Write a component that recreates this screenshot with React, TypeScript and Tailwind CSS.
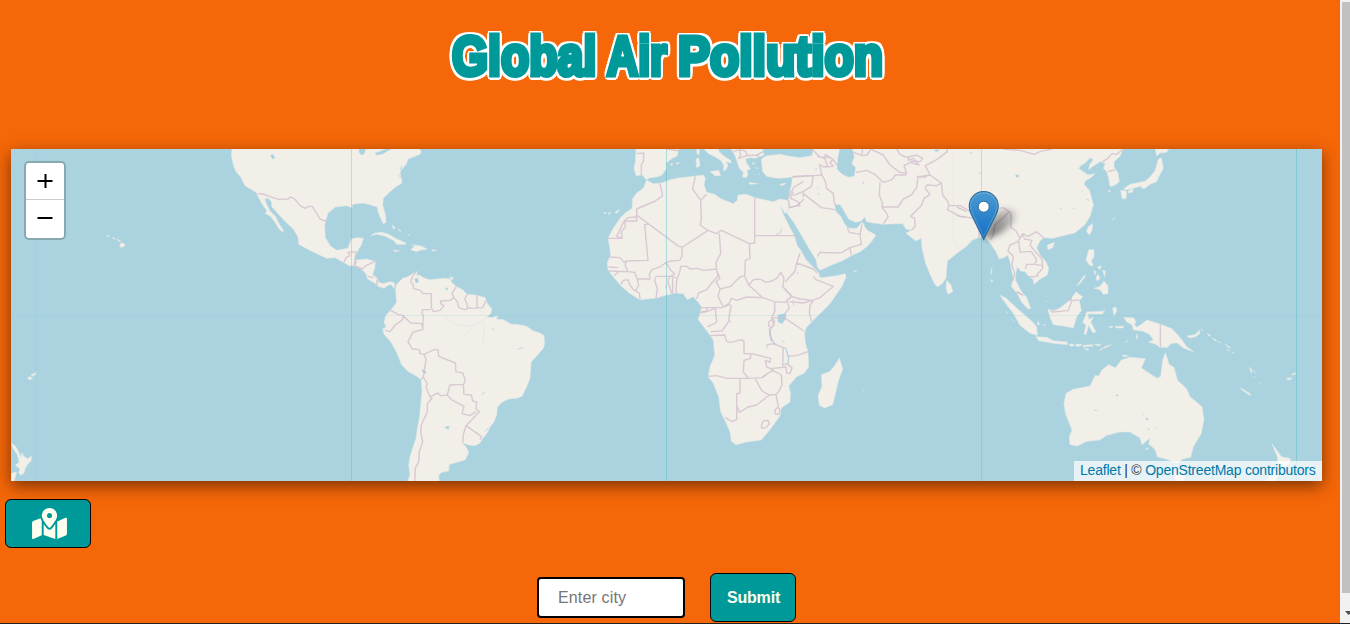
import React from "react";
import { FaMapMarkedAlt } from "react-icons/fa";

type Tile = { at: string; land?: string; border?: string; water?: string; river?: string };

// Each tile is drawn at three units per pixel from its own origin.
const tiles: Tile[] = [
  {
    at: "translate(220 145) scale(.33333)",
    land:
      "M36 12L34 30 40 60 48 80 62 96 75 122 92 132 108 142 116 158 128 180 140 196 136 206 152 214 168 236 176 250 188 262 190 256 178 238 166 214 150 198 140 178 134 162 146 160 154 170 156 186 172 204 196 230 220 252 234 276 236 298 262 312 290 326 320 340 345 338 370 352 388 362 400 362 424 372 438 386 442 402 464 414 474 424 492 430 500 424 512 418 524 432 530 424 520 412 508 410 490 416 476 412 470 398 458 390 464 370 466 350 440 342 418 344 402 346 408 330 416 312 424 300 430 280 410 278 394 282 388 298 384 310 350 316 332 304 316 278 314 240 320 218 324 204 346 186 380 182 396 188 400 178 428 174 446 178 458 182 472 186 474 200 482 220 490 236 498 232 496 208 488 180 490 160 510 140 530 124 546 114 544 100 540 84 548 70 560 56 564 42 580 36 600 28 604 20 598 12Z" +
      "M452 272L464 264 486 262 506 268 530 282 558 294 556 298 530 298 520 286 496 274 470 268ZM572 314L584 304 576 300 600 302 622 312 600 316 590 320ZM520 314L538 318 524 320ZM636 314L650 316 638 319ZM516 240L526 248 520 252ZM534 250L540 256 542 262ZM564 268L570 272Z",
    border:
      "M112 146L130 147 150 155 176 163 205 162 210 156 222 160 240 182 256 190 266 184 276 184 288 202 300 222 320 229M372 352L378 338 390 332 384 322 408 320 406 344 402 362M402 362L410 350M404 362L426 372 438 362 464 350M442 394L460 398M470 404L472 422M524 418L526 432",
    water: "M152 30L158 28 164 38 158 42ZM418 12L436 12 432 26 424 30 418 22ZM466 24L480 20 500 12 512 12 488 26 470 30Z",
    river: "M394 178L402 184M544 62L542 74 550 80M536 90L542 98",
  },
  {
    at: "translate(370 265) scale(.33333)",
    land:
      "M76 66L84 54 98 40 112 36 128 26 142 20 140 32 148 30 160 38 180 44 200 42 222 40 240 42 246 54 262 66 280 76 290 88 318 90 346 98 352 116 366 132 362 146 350 156 366 158 382 152 380 162 400 164 424 178 440 178 470 184 490 198 510 204 522 212 524 236 520 250 506 266 494 280 484 290 482 310 480 340 468 370 456 394 440 400 416 402 396 412 382 426 380 450 372 470 362 484 350 506 338 520 330 534 316 542 296 540 278 534 290 548 296 564 286 584 262 592 238 598 236 618 216 622 206 630 208 650 112 650 120 630 116 600 120 575 128 550 138 520 142 490 148 460 152 420 156 380 154 344 140 334 112 318 94 298 80 262 62 230 42 208 38 192 48 186 42 170 48 150 62 136 80 112 78 90ZM238 36L250 38 246 46Z",
    border:
      "M138 22L128 34 122 50 130 60 130 70 150 76 160 86 184 86 184 128 190 140 210 136 222 122 212 116 212 108 240 106 252 98 246 84 256 70 258 64M182 134L158 134 156 146 160 152 158 194 140 198 128 202 114 230 126 252 148 254 150 266 162 268 192 254 204 254 206 274 256 294 258 320 278 324 286 346 280 360 282 388 304 390 308 408 320 412 318 432 328 440 288 482 334 514 330 524M62 136L84 148 100 152 98 164 76 180 60 200 46 196M100 152L122 174 156 176 158 192M162 268L168 282 164 310 160 336 154 342M160 336L172 356 168 366 180 396 204 384 212 392 232 390 240 360 282 358M232 390L244 404 282 424 276 446 300 452 318 440M288 482L280 508 278 534M180 396L186 400 172 416 172 440 154 480 152 500 158 530 148 560 146 590 136 610 134 648M252 98L262 110 266 128 284 134 300 128 304 130 338 128 348 106M292 88L284 102 292 120 292 132M320 90L322 128",
    water:
      "M134 42L142 40 146 50 138 54ZM158 312L168 320 166 326 158 320ZM226 486L236 484 236 492 228 490ZM226 70L232 68 232 76Z",
    river: "M444 252L460 248M334 390L346 380M364 190L374 196M344 500L356 488",
  },
  {
    at: "translate(600 145) scale(.33333)",
    land:
      "M108 12L106 50 102 70 108 92 128 90 138 104 150 98 170 96 186 90 200 70 198 56 210 44 232 32 236 12Z" +
      "M312 12L326 26 346 36 362 46 372 62 370 78 378 74 384 60 376 50 394 54 392 46 372 34 358 20 354 12ZM330 80L356 76 362 92 346 92ZM288 42L296 38 300 62 290 68ZM290 12L298 14 297 30 291 26Z" +
      "M394 12L404 30 410 46 418 70 430 82 428 96 440 98 444 86 440 76 452 72 440 54 436 42 450 38 466 40 478 36 492 30 488 12ZM446 112L474 116 450 118ZM538 118L558 114 548 122ZM210 58L218 56 216 62ZM228 54L238 52 234 58ZM476 86L480 90ZM456 52L466 56 460 58ZM464 68L474 70Z" +
      "M140 106L160 116 186 114 210 104 240 98 280 94 310 90 316 100 312 120 320 142 344 148 364 162 400 176 412 166 414 150 440 148 464 158 500 166 520 170 540 162 562 166 572 180 562 200 556 206 546 190 540 182 552 212 566 240 582 270 592 302 602 316 618 344 636 362 648 374 656 384 660 398 680 396 710 392 736 386 738 396 726 424 708 450 690 476 662 504 640 525 618 549 614 565 616 595 624 619 626 667 612 685 590 695 566 723 572 745 570 771 544 789 540 813 512 851 484 885 440 891 408 899 394 889 390 861 376 829 362 801 356 755 340 715 324 695 330 665 344 631 340 585 326 565 314 549 294 523 302 501 304 485 294 471 280 455 262 464 250 446 230 444 200 450 166 460 120 464 90 446 64 424 40 396 24 374 22 352 32 330 28 300 24 280 40 250 60 220 76 204 96 190 98 160 110 144 130 130Z" +
      "M10 202L20 204 14 206ZM24 206L30 200 30 208ZM44 204L58 192 52 204Z",
    border:
      "M110 26L132 24 130 50 124 60 124 90M200 12L240 18M400 20L418 14 422 30 416 40 440 32 470 30 478 36M418 14L436 18 442 30M470 30L490 20" +
      "M180 116L188 152 166 168 110 192 110 228 74 228 76 246 64 260 66 280 24 280M66 280L50 274 72 228 84 218 108 216M110 210L236 304 248 306 324 256 300 240 304 226 302 166 278 132 286 94M324 256L350 266 364 256 448 296 464 294 464 160M302 166L320 148M464 272L592 272M132 238L150 238M134 240L144 346 78 348 72 352 60 338 28 336M78 348L76 362 84 380 26 378M26 366L54 368M84 380L104 382 112 402 150 402 148 388 156 374 184 364 198 352 214 348 240 346 246 332 246 306M42 392L56 380M62 418L70 406 84 404 90 420 100 434 118 444 120 462M112 402L116 420 108 436M168 394L164 408 172 430 168 460M168 394L208 394 204 410 216 448M198 352L212 376 224 386 212 394 228 398M218 398L218 448M228 446L230 406 240 378 242 364 260 364 270 372 292 370 310 376 350 372 348 352 362 326 358 266M350 374L354 394 340 408 320 434 296 444 290 462M448 296L450 340 436 346 434 392 420 396 392 424 360 432 348 410 360 400 350 376M360 432L354 454 370 486 388 474 394 460 410 466 440 456 488 458 446 420 434 394M446 420L460 404 480 402 498 412 516 408 530 400 542 382 552 400 548 426 558 434 576 454 560 466 556 472 524 470 488 458M300 488L368 488M304 500L320 498 322 488" +
      "M590 354L584 380 556 410M552 430L574 454 600 462 636 466 660 458 700 424 648 404 640 394M590 354L640 372 652 384M590 354L600 324" +
      "M370 486L390 478M394 480L388 510 386 530 366 558 332 560M302 504L320 500 346 490 350 532 322 546M330 572L374 570 380 590 394 592 424 584 432 590 432 626 452 626 452 640 432 646 430 682 446 700M324 694L350 692 380 700 446 700 486 698 520 674 500 666 496 646 510 652 512 640 502 638 454 626M500 600L520 596 550 608 548 660 560 656 576 668 570 686 560 684 558 666 516 670M564 634L590 632 624 620M550 608L558 610M514 590L510 555 522 540 514 520 524 500 524 472M506 530L520 522 524 530 514 550 506 542 506 530M520 518L556 520 612 558M556 520L556 504 568 490 560 466M568 470L610 474 638 466M640 468L630 480 628 502 634 528M420 700L420 744 410 746 410 824 396 830 376 818M410 780L418 802 444 786 470 780 508 750 486 738 466 702M508 750L528 748 536 790M528 748L536 740 546 720 544 690 530 682 514 676M536 788C524 788 520 806 530 808S542 798 536 788M484 840L490 828 504 826 508 836 498 848 486 850 484 840" +
      "M576 96L640 92M564 160L582 126 610 110M566 164L568 188 590 182 602 172 612 162",
    water: "M534 510L556 506 556 522 546 536 534 530Z",
    river:
      "M508 550L510 572 526 598M558 612L566 640 564 656M486 698L500 686M526 270L540 264 546 250M522 496L528 490M500 600L502 610M196 430L200 420M578 466L582 482M548 588L554 592",
  },
  {
    at: "translate(680 280) scale(.33333)",
    land: "M478 234L488 268 476 300 458 374 434 384 418 376 414 346 426 320 424 284 450 274 466 254ZM548 330L552 332Z",
    river: "M268 146L270 168 286 194M318 206L326 232 324 252M150 122L154 128",
  },
  {
    at: "translate(780 145) scale(.33333)",
    land:
      "M-56 42L-40 32 0 28 30 34 60 38 96 32 100 12 620 12 620 276 600 276 576 286 560 304 540 318 502 348 500 370 498 400 488 414 474 426 464 418 450 388 436 352 426 310 424 280 408 288 392 276 378 264 394 256 378 252 368 236 350 236 310 238 280 234 260 230 254 216 244 228 226 232 206 222 190 194 180 178 164 180 168 200 182 214 190 230 202 248 212 250 230 250 246 232 252 238 254 246 262 256 288 270 276 288 262 304 240 320 214 332 190 346 150 362 120 376 112 366 108 344 88 312 64 270 40 230 22 206 26 184 24 166 30 140 36 110 36 96 20 98 0 100 -20 98 -40 94 -52 80ZM500 406L514 422 518 440 504 448 498 430ZM220 378L230 378 226 381Z",
    border:
      "M112 34L134 40 142 60 136 68M118 58L130 66 160 64 150 52 160 44 172 62M134 40L136 28 160 44M98 14L120 36 150 38M118 58L126 90 100 92 40 94M126 90L136 110 140 130 160 146 162 170 168 184M100 92L94 124 70 140 70 156M40 152L68 140M70 146L124 188 166 194M40 140L32 160 54 170 60 182 26 188M202 248L208 262 240 268 246 238M240 268L244 298 210 308 186 322 168 324 120 322 112 334M210 308L214 330M228 82L260 76 284 88 310 112 336 104 346 90 380 90M300 110L298 150 308 176 306 186 322 208 324 216 310 236M306 186L354 186 370 162 394 150 410 128 414 96 450 90 436 62 470 44 502 20 500 12M245 32L248 12M216 20L246 32 262 30 272 12 310 30 330 60 360 82 380 84 372 62 392 52 416 60 400 40 384 46 386 36 410 30 428 40 420 50 392 48M350 12L360 28 376 36 386 36M394 256L406 244 404 220 392 214 410 196 424 182 432 160 450 148 436 130 440 120 470 122 484 114 488 150 504 170 506 182 540 182 576 202M484 114L450 90M506 182L502 194 540 214 584 220M584 220L596 250 598 280M410 94L440 96",
    water: "M180 12L174 40 172 72 186 86 206 96 222 92 226 68 214 56 222 36 216 12ZM248 112L252 113 250 116ZM462 16L478 14 472 20Z",
    river: "M260 26L268 20M112 130L116 132M114 144L118 149M106 72L111 72M50 384L56 384",
  },
  {
    at: "translate(960 145) scale(.33333)",
    land:
      "M-20 12L490 12 480 34 462 50 462 66 474 84 478 110 462 122 450 124 446 100 440 80 430 70 436 56 420 50 396 66 386 74 388 60 400 44 390 38 378 52 362 62 356 70 372 82 384 90 404 86 396 96 376 108 372 118 388 136 394 156 400 180 390 214 374 240 344 264 310 272 278 280 250 278 240 288 230 308 240 330 258 350 266 370 262 390 244 400 222 418 220 404 206 394 196 380 182 378 172 366 168 382 166 404 182 436 200 458 212 490 204 492 184 470 172 446 154 424 160 400 156 380 152 358 144 330 136 336 118 342 108 320 92 296 78 280 60 276 40 280 20 300 0 316 -20 280Z" +
      "M386 314L402 314 402 336 394 346 400 364 388 360 378 346ZM402 430L420 424 432 408 444 424 444 446 430 448 420 434ZM402 376L408 380 404 390ZM412 366L424 362 420 374ZM428 376L436 378 434 396ZM414 388L420 400 412 408 408 398ZM350 422L374 390 376 394 358 418ZM384 246L398 236 396 256 388 270 380 260ZM262 300L284 292 278 308 264 314ZM482 136L500 138 498 162 486 160ZM490 132L510 118 540 112 556 108 570 96 586 76 594 44 604 38 610 70 596 96 590 110 570 118 552 132 540 124 520 130 500 134ZM506 136L520 132 518 142 506 144ZM586 12L626 12 620 22 600 24 590 34ZM446 136L452 138 446 142ZM456 226L466 216 458 224ZM92 384L96 368 94 388ZM92 404L98 406 96 412Z",
    border:
      "M130 12L180 16 222 28 240 20 276 12M426 52L446 38 456 26 470 28 490 12M444 80L466 74M-10 186L20 200M-10 212L16 216M116 190L130 188 150 202 154 214 152 246 168 258 180 280M146 202L130 218 104 240 100 270 92 284M180 280L170 292 150 300 144 318 160 334 156 360 164 386 158 408M180 280L188 266 204 274 230 260 244 272 250 278M188 270L194 282 216 286 210 300 226 320 246 342 248 370 232 388 234 396M176 288L180 322 196 320 214 320 230 344 224 358 200 358 196 372M224 358L246 362M206 394L222 396 234 388M170 440L188 450",
    water: "M167 91L175 89 175 97 168 95ZM366 138L368 140ZM380 163L388 166Z",
    river: "M338 190L343 192M300 192L306 188M56 84L62 84M28 24L38 24",
  },
  {
    at: "translate(980 280) scale(.33333)",
    land:
      "M60 46L78 54 110 84 140 110 154 122 170 140 172 166 150 160 120 136 100 100 80 74ZM168 170L200 172 220 182 262 186 262 194 220 190 176 182ZM268 192L280 192 282 198 270 198ZM286 194L304 192 302 198 288 199ZM308 196L338 194 340 198 310 200ZM344 194L364 192 356 198ZM310 204L326 208 324 212ZM356 212L374 200 394 194 368 208ZM204 88L222 92 240 84 270 60 288 36 308 50 298 62 304 92 290 110 280 144 250 138 220 134 210 112ZM314 114L320 96 370 94 374 88 368 102 324 102 326 118 340 112 332 126 348 156 338 158 326 136 318 164 312 162 318 136 308 126Z" +
      "M432 112L462 114 468 128 462 132 470 142 486 132 500 120 540 132 576 146 594 166 606 180 620 200 642 216 610 204 590 188 570 192 564 202 538 202 530 194 506 186 520 180 510 164 490 154 460 150 456 134 440 126ZM620 168L646 164 658 150 660 160 648 170 630 174ZM398 84L408 82 410 92 402 108ZM386 140L398 138 396 144ZM404 140L430 138 430 144 410 144ZM470 162L474 170 470 178ZM436 188L444 182ZM174 124L180 134 172 132ZM190 134L196 134 194 138ZM78 94L84 100ZM96 118L102 124ZM196 62L200 66Z",
    border: "M110 36L130 46M212 90L216 96 240 94 264 92 276 62 298 60M262 60L274 60 274 46M541 132L541 202M368 208L374 204",
  },
  {
    at: "translate(1040 310) scale(.33333)",
    land:
      "M78 250L100 238 150 228 166 196 176 198 186 180 206 164 226 174 244 150 270 142 316 146 304 174 350 204 362 200 368 150 376 128 388 164 402 172 412 210 440 236 450 260 486 290 492 328 484 370 460 410 452 442 430 446 410 460 380 448 352 440 346 420 334 408 326 402 330 384 306 404 300 384 270 366 240 366 200 376 180 390 140 394 112 408 90 404 88 380 96 360 76 310 72 280ZM404 490L436 488 430 513 408 513ZM248 134L266 138 250 140ZM316 416L326 414 320 420Z" +
      "M696 402L716 428 724 440 752 446 748 464 730 470 720 486 704 513 676 513 700 490 716 470 712 440ZM602 234L632 252 630 256 606 240ZM740 204L756 204 750 210 742 208ZM754 194L768 188 764 194ZM502 70L512 78 506 78ZM516 84L532 92 524 92ZM534 96L544 98ZM556 102L572 114 564 112ZM560 118L570 124ZM576 126L584 130ZM628 172L636 180 634 190ZM638 180L648 190ZM640 198L646 204ZM484 56L488 64ZM656 218L660 222Z",
    water: "M228 255L235 255 232 259ZM317 325L325 326 321 331ZM324 356L328 357 326 360Z",
    river: "M346 355L349 357M309 313L313 315M163 301L171 301",
  },
  {
    at: "translate(0 140) scale(.33333)",
    land:
      "M360 312L368 308 376 316 366 322 360 320ZM338 292L346 296 340 297ZM350 297L362 303 356 304ZM320 287L330 288 322 290ZM82 714L90 710 98 714 90 720ZM94 704L110 698 104 706 96 708ZM33 910L46 918 58 940 62 952 66 938 72 950 84 956 94 948 94 962 84 972 76 984 72 1000 62 1006 56 998 60 986 46 976 58 966 52 944 40 926ZM33 1000L50 996 42 1024 33 1024Z",
  },
];

function WorldMap() {
  return (
    <svg viewBox="11 149 1311 332" className="block h-full w-full" aria-hidden="true">
      {tiles.map((t) => (
        <path key={t.at} transform={t.at} d={t.land} fill="#f2efe9" stroke="#dfe8e6" strokeWidth="1.8" strokeLinejoin="round" />
      ))}
      {tiles.map((t) => (
        <g key={t.at} transform={t.at} strokeLinejoin="round" fill="none">
          {t.water && <path d={t.water} fill="#aad3df" stroke="#aad3df" strokeWidth="1.5" />}
          {t.river && <path d={t.river} stroke="#9fc9de" strokeWidth="3" opacity=".65" />}
          {t.border && <path d={t.border} stroke="#d2bfcd" strokeWidth="4.2" opacity=".8" />}
        </g>
      ))}
      <path
        transform="translate(370 265) scale(.33333)"
        d="M350 158C334 170 320 180 302 182S270 184 250 172M342 168L340 240M314 182L276 220M250 172L220 156"
        fill="none"
        stroke="#aad3df"
        strokeWidth="2.5"
        opacity=".25"
      />
      <path d="M11 315.5H1322M36.5 149V481" stroke="#86c3d1" strokeOpacity=".2" />
      <path d="M351.5 149V481M981.5 149V481" stroke="#58b3bc" strokeOpacity=".33" />
      <path d="M666.5 149V481M1296.5 149V481" stroke="#4fb8c2" strokeOpacity=".42" />
    </svg>
  );
}

function Pin() {
  return (
    <svg width="72" height="54" viewBox="0 0 72 54" className="absolute left-[955px] top-[41px]" aria-hidden="true">
      <defs>
        <linearGradient id="pin" x1="0" y1="0" x2="0" y2="1">
          <stop offset="0" stopColor="#4a9bd3" />
          <stop offset="1" stopColor="#126fc6" />
        </linearGradient>
        <linearGradient id="shade" x1="0" y1="1" x2="1" y2="0">
          <stop offset="0" stopColor="#000" stopOpacity=".6" />
          <stop offset="1" stopColor="#000" stopOpacity=".12" />
        </linearGradient>
        <filter id="soft" x="-40%" y="-40%" width="180%" height="180%">
          <feGaussianBlur stdDeviation="3" />
        </filter>
      </defs>
      <path d="M18 50L24 33C29 21 43 15 48 21S45 36 35 43Z" fill="url(#shade)" filter="url(#soft)" />
      <path
        d="M17.700 1.500C9.500 1.500 3.200 8 3.200 16.200c0 3.400 1.300 6.500 2.500 9L17.700 49.400 29.800 25.200c1.200-2.500 2.500-5.600 2.500-9C32.300 8 25.900 1.500 17.700 1.500Z"
        fill="url(#pin)"
        stroke="#2e6c97"
        strokeWidth="1.1"
      />
      <path d="M17.700 2.800C10.100 2.800 4.500 8.800 4.500 16.200c0 3.200 1.200 6 2.400 8.400L17.700 46.500 28.600 24.600c1.200-2.400 2.400-5.200 2.400-8.400C31 8.800 25.300 2.800 17.700 2.800Z" fill="none" stroke="#fff" strokeOpacity=".15" strokeWidth="1.200" />
      <circle cx="17.700" cy="16.700" r="5.500" fill="#fff" stroke="#2e6c97" strokeWidth="1" />
    </svg>
  );
}

const outline =
  "block w-max origin-left [-webkit-text-stroke:5px_#009999] [text-shadow:5px_0_#fff,-5px_0_#fff,0_4.5px_#fff,0_-4.5px_#fff,4px_3.6px_#fff,-4px_3.6px_#fff,4px_-3.6px_#fff,-4px_-3.6px_#fff,5px_2px_#fff,-5px_2px_#fff,5px_-2px_#fff,-5px_-2px_#fff,2px_4.5px_#fff,-2px_4.5px_#fff,2px_-4.5px_#fff,-2px_-4.5px_#fff]";

export default function App() {
  return (
    <div className="flex h-[624px] w-full overflow-hidden border-b border-[#222] bg-[#f56708] font-['Liberation_Sans',Arial,sans-serif]">
      <main className="flex h-[623px] min-w-0 flex-1 flex-col">
        <h1 className="flex h-[149px] whitespace-pre pl-[452px] pt-[20px] text-[56px] font-bold leading-[72px] text-[#009999]">
          <span className="block w-[155px]">
            <span className={"scale-x-[.828] " + outline}>Global </span>
          </span>
          <span className="block w-[71px]">
            <span className={"scale-x-[.77] " + outline}>Air </span>
          </span>
          <span className="block w-[210px]">
            <span className={"scale-x-[.856] " + outline}>Pollution</span>
          </span>
        </h1>

        <section className="relative ml-[11px] h-[332px] w-[1311px] shrink-0 bg-[#aad3df] shadow-[0_5px_15px_rgba(0,0,0,.5)]">
          <WorldMap />
          <Pin />
          <div className="absolute left-[13px] top-[12px] flex w-[42px] flex-col overflow-hidden rounded-[5px] border-2 border-black/20 bg-white bg-clip-padding">
            <button className="flex h-[37px] items-center justify-center border-b border-[#ccc]" aria-label="Zoom in">
              <svg width="16" height="16" viewBox="0 0 16 16"><path d="M.5 8h15M8.500 1v14" stroke="#000" strokeWidth="2" /></svg>
            </button>
            <button className="flex h-[38px] items-center justify-center" aria-label="Zoom out">
              <svg width="16" height="16" viewBox="0 0 16 16"><path d="M.5 7h15" stroke="#000" strokeWidth="2" /></svg>
            </button>
          </div>
          <div className="absolute bottom-0 right-0 h-[20px] w-[248px] whitespace-nowrap bg-white/70 pl-[6px] text-[14px] leading-[19px] tracking-[-.21px] text-[#333]">
            <a className="text-[#0078a8]">Leaflet</a> | © <a className="text-[#0078a8]">OpenStreetMap contributors</a>
          </div>
        </section>

        <button className="ml-[5px] mt-[18px] flex h-[49px] w-[86px] shrink-0 items-center justify-center rounded-[6px] border border-black bg-[#009999] pl-[2px] text-[ivory]" aria-label="Show map">
          <FaMapMarkedAlt className="h-[31px] w-[35px]" />
        </button>

        <form className="mt-[25px] flex items-center gap-[25px] pl-[537px]" onSubmit={(e) => e.preventDefault()}>
          <input
            placeholder="Enter city"
            className="h-[41px] w-[148px] rounded-[4px] border-2 border-black bg-white pl-[19px] text-[16px] tracking-[.15px] text-black placeholder:text-[#757575]"
          />
          <button className="h-[49px] w-[86px] rounded-[6px] border border-black bg-[#009999] pl-[1px] text-[16px] font-bold tracking-[-.2px] text-[ivory]">Submit</button>
        </form>
      </main>

      <div className="flex h-[623px] w-[10px] shrink-0 flex-col justify-between bg-[#f1f1f1] pl-[2px]" aria-hidden="true">
        <div className="mt-[2px] h-[591px] bg-[#c1c1c1]" />
        <svg width="8" height="17" viewBox="0 0 8 17"><path d="M3 5h7L6.500 9Z" fill="#505050" /></svg>
      </div>
    </div>
  );
}
